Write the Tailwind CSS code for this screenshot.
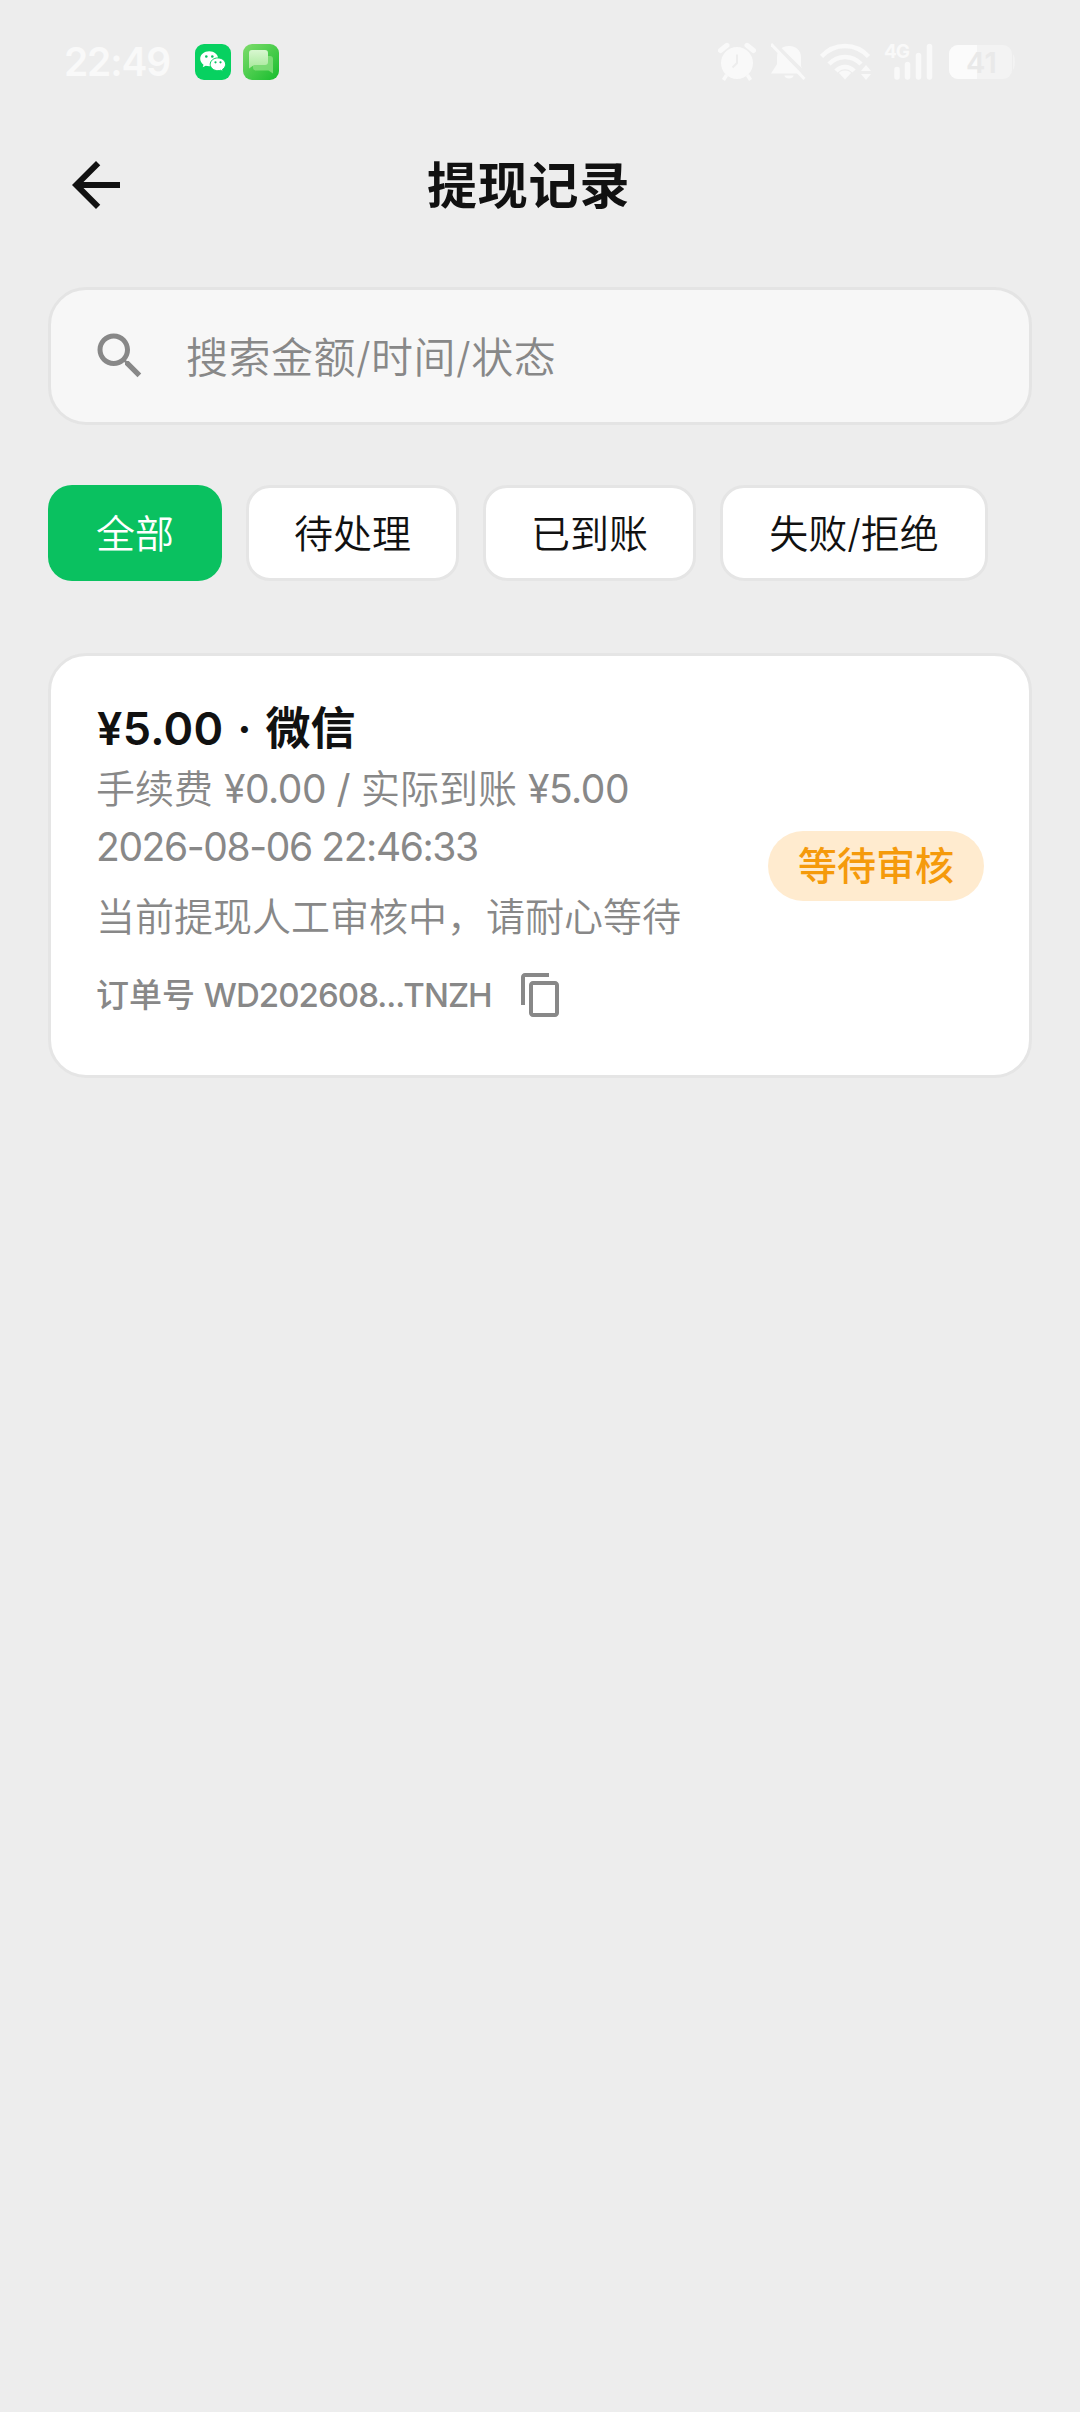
<!DOCTYPE html>
<html lang="zh-CN">
<head>
<meta charset="UTF-8">
<title>提现记录</title>
<script src="https://cdn.jsdelivr.net/npm/@tailwindcss/browser@4"></script>
</head>
<body class="h-[2412px] w-[1080px] overflow-hidden bg-[#ededed] font-['Inter','Noto_Sans_CJK_SC',sans-serif] font-[350] whitespace-nowrap text-[#111111]">
  <!-- Status bar -->
  <header class="flex h-[124px] items-center pl-16 text-[#f9f9f9]">
    <div class="w-[131px] text-[39px] font-semibold leading-[48px] tracking-[-1.2px]">22:49</div>
    <svg class="size-9" viewBox="0 0 36 36">
      <rect width="36" height="36" rx="9" fill="#07d160"/>
      <path d="M14.2 7.3c-5 0-9 3.3-9 7.5 0 2.4 1.3 4.500 3.300 5.900l-.8 2.600 3-1.600c1.100.3 2.300.5 3.500.5 5 0 9-3.300 9-7.400s-4-7.500-9-7.500z" fill="#fff"/>
      <path d="M22.900 13.900c-4.300 0-7.700 2.900-7.700 6.400s3.400 6.400 7.700 6.400c1 0 1.900-.1 2.700-.4l2.500 1.300-.6-2.200c1.900-1.200 3.100-3 3.100-5.100 0-3.500-3.400-6.400-7.700-6.400z" fill="#fff" stroke="#07d160" stroke-width="1"/>
      <g fill="#07c160"><circle cx="11.300" cy="12.500" r="1.300"/><circle cx="17.300" cy="12.500" r="1.300"/><circle cx="20.500" cy="18.300" r="1.100"/><circle cx="25.500" cy="18.300" r="1.100"/></g>
    </svg>
    <svg class="ml-3 size-9" viewBox="0 0 36 36">
      <defs>
        <linearGradient id="msg" x1="0" y1="0" x2="1" y2="1"><stop offset="0" stop-color="#7fdc6c"/><stop offset="1" stop-color="#16bd2d"/></linearGradient>
        <linearGradient id="bub" x1="0" y1="0" x2="0" y2="1"><stop offset="0" stop-color="#d8f7d0"/><stop offset="1" stop-color="#a8e99b"/></linearGradient>
      </defs>
      <rect width="36" height="36" rx="9" fill="url(#msg)"/>
      <path d="M13 12h14a3 3 0 0 1 3 3v14.500l-4.500-3H13a3 3 0 0 1-3-3V15a3 3 0 0 1 3-3z" fill="#8fe184" fill-opacity=".75"/>
      <path d="M9 6h13a3 3 0 0 1 3 3v9a3 3 0 0 1-3 3H11l-5 3.500V9a3 3 0 0 1 3-3z" fill="url(#bub)"/>
    </svg>
    <svg class="ml-[439px] h-10 w-[38px]" viewBox="0 0 38 40" fill="none">
      <path d="M2.500 8.500 9 3.300M35.500 8.500 29 3.300" stroke="currentColor" stroke-width="5" stroke-linecap="round"/>
      <circle cx="19" cy="21" r="16" fill="currentColor"/>
      <path d="m8.500 33-3 5M29.500 33l3 5" stroke="currentColor" stroke-width="3.500"/>
      <path d="M19 12.500V21l-4.500 4.500" stroke="#ededed" stroke-width="2"/>
    </svg>
    <svg class="ml-[15px] h-10 w-9" viewBox="0 0 36 40" fill="none">
      <path d="M18 4c-7 0-12 4.500-12 11v7L0 31.500h33L30 24v-9C30 8.500 25 4 18 4zM13.500 33.500h9c0 4-9 4-9 0z" fill="currentColor"/>
      <path d="M3 1.500 37 35" stroke="#ededed" stroke-width="4"/>
      <path d="M0 2 33.500 37" stroke="currentColor" stroke-width="3"/>
    </svg>
    <svg class="ml-[13px] h-10 w-[54px]" viewBox="0 0 54 40" fill="none" stroke="currentColor" stroke-width="4.500">
      <path d="M1.500 14.500c13-14 34-14 47 0M9 22c9-9.500 23-9.500 32 0M16 29c5-5.500 13-5.500 18 0"/>
      <path d="M25 28.500c-3 0-5 1.200-6 2.500l6 6.500 6-6.500c-1-1.300-3-2.500-6-2.500z" fill="currentColor" stroke="none"/>
      <path d="m41 29 5-6 5 6zM41 32h10l-5 6z" fill="currentColor" stroke="none"/>
    </svg>
    <div class="relative ml-[10px] h-10 w-[49px]">
      <span class="absolute -top-[2px] left-0 text-[19px] font-bold leading-[24px] tracking-[-1px]">4G</span>
      <svg class="size-full" viewBox="0 0 49 40" stroke="currentColor" stroke-width="5.500" stroke-linecap="round">
        <path d="M13 27.500V35M23.500 22.500V35M34.500 13.500V35M45.500 4.500V35"/>
      </svg>
    </div>
    <svg class="ml-[16px] h-[34px] w-[68px]" viewBox="0 0 68 34">
      <defs><clipPath id="bat"><rect width="63" height="34" rx="9"/></clipPath></defs>
      <g clip-path="url(#bat)"><rect width="68" height="34" fill="#f3f3f3"/><rect width="28" height="34" fill="#fbfbfb"/></g>
      <path d="M64 9c2.500 2.500 2.500 13.500 0 16z" fill="#f3f3f3"/>
      <text x="17" y="27.500" font-family="Inter" font-size="29" font-weight="600" fill="#e9e9e9">41</text>
    </svg>
  </header>

  <!-- App bar -->
  <nav class="flex h-[122px] items-center pl-[60px]">
    <svg class="size-[72px]" viewBox="0 0 24 24" fill="currentColor"><path d="M20 11H7.830l5.590-5.590L12 4l-8 8 8 8 1.410-1.410L7.830 13H20v-2z"/></svg>
    <h1 class="ml-[295px] pt-[2px] text-[50px] font-semibold leading-[72px] tracking-[0.8px]">提现记录</h1>
  </nav>

  <main class="px-12 pt-[41px]">
    <!-- Search field -->
    <div class="flex h-[138px] items-center rounded-[38px] border-[3px] border-[#e4e4e4] bg-[#f7f7f7] pl-[39px] text-[#888888]">
      <svg class="size-[60px]" viewBox="0 0 24 24" fill="currentColor"><path d="M15.500 14h-.79l-.28-.27C15.410 12.590 16 11.110 16 9.500 16 5.910 13.090 3 9.500 3S3 5.910 3 9.500 5.910 16 9.500 16c1.610 0 3.090-.59 4.230-1.570l.27.28v.79l5 4.990L20.490 19l-4.990-5zm-6 0C7.010 14 5 11.990 5 9.500S7.010 5 9.500 5 14 7.010 14 9.500 11.990 14 9.500 14z"/></svg>
      <span class="ml-9 pt-[3px] text-[42px] leading-[60px] tracking-[0.5px]">搜索金额/时间/状态</span>
    </div>

    <!-- Filters -->
    <div class="mt-[60px] flex h-24 gap-6 text-[39px] leading-[54px]">
      <button class="flex w-[174px] items-center justify-center rounded-[24px] bg-[#0ac160] pt-px text-white">全部</button>
      <button class="flex w-[213px] items-center justify-center rounded-[24px] border-[3px] border-[#e5e5e5] bg-white pt-px">待处理</button>
      <button class="flex w-[213px] items-center justify-center rounded-[24px] border-[3px] border-[#e5e5e5] bg-white pt-px">已到账</button>
      <button class="flex w-[268px] items-center justify-center rounded-[24px] border-[3px] border-[#e5e5e5] bg-white pt-px">失败/拒绝</button>
    </div>

    <!-- Withdrawal record -->
    <section class="mt-[72px] flex h-[425px] items-center justify-between rounded-[38px] border-[3px] border-[#e5e5e5] bg-white px-[45px]">
      <div class="flex h-[327px] flex-col text-[39px] leading-[58px] text-[#888888]">
        <h2 class="mb-1 pl-px text-[45px] font-semibold leading-[54px] text-[#111111] [word-spacing:2px]"><span class="tracking-[0.3px]">¥5.00 · </span>微信</h2>
        <p>手续费 <span class="font-normal tracking-[-0.5px]">¥0.00 /</span> 实际到账 <span class="font-normal tracking-[-0.5px]">¥5.00</span></p>
        <p class="font-normal tracking-[-1.4px]">2026-08-06 22:46:33</p>
        <p class="mt-3">当前提现人工审核中，请耐心等待</p>
        <div class="mt-[25px] flex h-12 items-center text-[33px] font-medium leading-12">
          <span class="w-[421px]">订单号 <span class="tracking-[-0.95px]">WD202608...TNZH</span></span>
          <svg class="size-12" viewBox="0 0 24 24" fill="currentColor"><path d="M16 1H4c-1.100 0-2 .9-2 2v14h2V3h12V1zm3 4H8c-1.100 0-2 .9-2 2v14c0 1.100.9 2 2 2h11c1.100 0 2-.9 2-2V7c0-1.100-.9-2-2-2zm0 16H8V7h11v14z"/></svg>
        </div>
      </div>
      <span class="flex h-[70px] w-[216px] items-center justify-center rounded-full bg-[#ffebcf] pt-px text-[39px] font-medium leading-[54px] text-[#f59a0b]">等待审核</span>
    </section>
  </main>
</body>
</html>
